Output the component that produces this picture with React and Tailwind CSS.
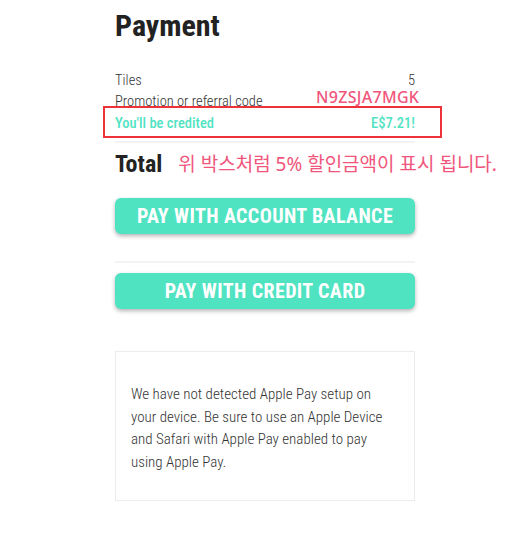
import React from 'react';

const font = { fontFamily: '"Roboto Condensed", "Liberation Sans Narrow", Roboto, sans-serif' };

const App = () => {
  return (
    <div className="min-h-[547px] bg-white" style={font}>
      <div className="relative ml-[115px] w-[300px] pt-[8px]">
        <h1 className="text-[30px] font-bold leading-[36px] text-[#222]">Payment</h1>

        {/* Summary rows */}
        <div className="mt-[26px] text-[14.5px] font-light text-[#333]">
          <div className="flex h-[21px] items-center justify-between leading-[15px]">
            <span>Tiles</span>
            <span>5</span>
          </div>
          <div className="flex h-[21px] items-center justify-between leading-[15px]">
            <span>Promotion or referral code</span>
          </div>
          <div className="relative flex justify-between leading-[22px] pt-[1px] font-medium text-[#50e3c2]">
            <span>You'll be credited</span>
            <span>E$7.21!</span>
            <div className="absolute left-[-12px] right-[-27px] top-[-6px] h-[32px] border-2 border-[#ee3338]"></div>
          </div>
          <div className="mt-[6px] h-[2px] bg-[#f3f3f3]"></div>
        </div>

        {/* Annotation: promo code */}
        <span
          className="absolute left-[201px] top-[89px] text-[16px] font-medium leading-[16px] tracking-[0.3px] text-[#f0567c]"
          style={{ fontFamily: '"Noto Sans", sans-serif' }}
        >
          N9ZSJA7MGK
        </span>

        <div className="mt-[6px] flex h-[30px] items-center whitespace-nowrap">
          <span className="text-[24px] font-bold leading-[30px] text-[#222]">Total</span>
          <span
            className="ml-[16px] text-[19px] leading-[24px] text-[#f0567c]"
            style={{ fontFamily: '"Noto Sans", "Noto Sans CJK KR", sans-serif' }}
          >
            위 박스처럼 5% 할인금액이 표시 됩니다.
          </span>
        </div>

        <button className="mt-[19px] h-[36px] w-full rounded-[6px] bg-[#50e3c2] text-[20px] font-bold uppercase tracking-[0.4px] text-white shadow-[0_2px_4px_rgba(0,0,0,0.3)]">
          Pay with account balance
        </button>

        <div className="mt-[27px] h-[2px] bg-[#f3f3f3]"></div>

        <button className="mt-[10px] h-[36px] w-full rounded-[6px] bg-[#50e3c2] text-[20px] font-bold uppercase tracking-[0.4px] text-white shadow-[0_2px_4px_rgba(0,0,0,0.3)]">
          Pay with credit card
        </button>

        <div className="mt-[42px] h-[150px] border border-[#ececec] px-[15px] pt-[31px] text-[15px] font-light leading-[22.5px] text-[#333]">
          We have not detected Apple Pay setup on your device. Be sure to use an Apple Device and Safari with Apple Pay enabled to pay using Apple Pay.
        </div>
      </div>
    </div>
  );
};

export default App;
